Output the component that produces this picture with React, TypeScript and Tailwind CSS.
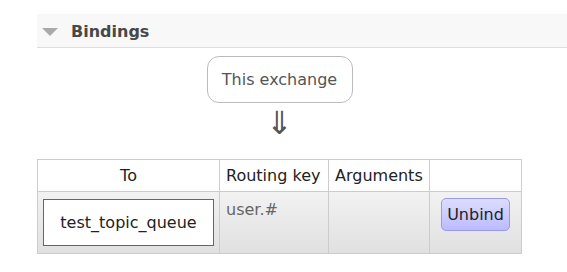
export default function App() {
  return (
    <div className="w-[567px] h-[272px] bg-white pt-[14px] overflow-hidden" style={{ fontFamily: '"DejaVu Sans", Verdana, sans-serif' }}>
      <div className="ml-[37px] h-[34px] bg-[#f8f8f8] border-b border-[#dddddd] flex items-center">
        <span className="ml-[5px] mt-[2px] w-0 h-0 border-l-[8px] border-r-[8px] border-t-[8px] border-l-transparent border-r-transparent border-t-[#aaaaaa]" />
        <span className="ml-[13px] mt-[2px] text-[16px] font-bold text-[#484848]">Bindings</span>
      </div>
      <div className="ml-[37px] flex flex-col w-[485px]">
        <div className="flex flex-col items-center mt-[8px]">
          <div className="w-[146px] h-[47px] border border-[#bbbbbb] rounded-[12px] flex items-center justify-center text-[16px] text-[#555555]">
            This exchange
          </div>
          <div className="text-[32px] leading-[30px] text-[#555555] mt-[5px]" style={{ fontFamily: '"Liberation Sans", sans-serif' }}>⇓</div>
        </div>
        <table className="mt-[21px] w-[485px] border-collapse text-[16px]">
          <thead>
            <tr className="h-[32px] bg-white">
              <th className="w-[182px] border border-[#cccccc] font-normal text-center text-[#222222]">To</th>
              <th className="w-[109px] border border-[#cccccc] font-normal text-left pl-[6px] text-[#222222]">Routing key</th>
              <th className="w-[101px] border border-[#cccccc] font-normal text-left pl-[6px] text-[#222222]">Arguments</th>
              <th className="border border-[#cccccc]"></th>
            </tr>
          </thead>
          <tbody>
            <tr className="h-[62px] bg-gradient-to-b from-[#f2f2f2] to-[#e0e0e0]">
              <td className="border border-[#cccccc] px-[5px] align-middle">
                <div className="h-[47px] bg-white border border-[#666666] flex items-center justify-center text-[#222222]">
                  test_topic_queue
                </div>
              </td>
              <td className="border border-[#cccccc] align-top pl-[6px] pt-[6px] text-[#666666]">user.#</td>
              <td className="border border-[#cccccc]"></td>
              <td className="border border-[#cccccc] align-top pt-[6px] pl-[11px]">
                <button className="w-[69px] h-[33px] rounded-[5px] border border-[#9999ee] bg-gradient-to-b from-[#ddddff] to-[#bbbbff] text-[16px] text-[#222222]">
                  Unbind
                </button>
              </td>
            </tr>
          </tbody>
        </table>
      </div>
    </div>
  );
}
